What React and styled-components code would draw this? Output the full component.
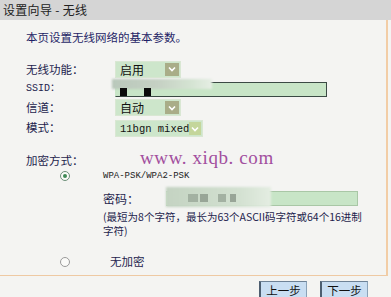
import React from 'react';
import styled, { createGlobalStyle } from 'styled-components';

//Page CSS
const Global = createGlobalStyle`
  html, body {
    margin: 0;
    padding: 0;
    background: #f4f4f2;
    font-family: "Noto Sans CJK SC", "DejaVu Sans", sans-serif;
    font-size: 12px;
    color: #1d1d4d;
  }
`;

const Page = styled.div`
  width: 391px;
  height: 297px;
  overflow: hidden;
  position: relative;
  background: #f4f4f2;
`;

const TitleBar = styled.div`
  height: 20px;
  line-height: 19px;
  padding-left: 3px;
  background: #d5d5d5;
  color: #222;
  font-size: 12px;
  letter-spacing: 0.3px;
`;

const Panel = styled.div`
  width: 388px;
  height: 256px;
  border-right: 2px solid #f2cda6;
  border-bottom: 1px solid #eec9a3;
  padding-left: 26px;
  box-sizing: border-box;
  position: relative;
`;

const Intro = styled.div`
  padding-top: 9px;
  height: 27px;
  line-height: 16px;
  font-size: 11.5px;
  color: #1f1f66;
`;

const FormGrid = styled.div`
  display: grid;
  grid-template-columns: 89px 1fr;
  grid-auto-rows: auto;
  align-items: center;
  margin-top: 3px;
`;

const Label = styled.div`
  font-family: ${p => (p.mono ? '"Liberation Mono", "Noto Sans CJK SC", monospace' : '"Noto Sans CJK SC", sans-serif')};
  font-size: ${p => (p.mono ? '10px' : '11.5px')};
  height: ${p => p.h || 19}px;
  line-height: ${p => p.h || 19}px;
  color: #1d1d4d;
`;

const Select = styled.div`
  display: flex;
  align-items: center;
  width: ${p => p.w}px;
  height: 17px;
  box-sizing: border-box;
  border: 1px solid #d9e7d3;
  background: #cde6cb;
  padding: 0 1px 0 4px;
`;

const SelectText = styled.span`
  flex: 1;
  font-family: ${p => (p.mono ? '"Liberation Mono", monospace' : '"Noto Sans CJK SC", sans-serif')};
  font-size: ${p => (p.mono ? '10.5px' : '12px')};
  color: #111;
  white-space: nowrap;
`;

const Arrow = styled.span`
  width: 14px;
  height: 13px;
  background: ${p => (p.light ? '#c4d69b' : '#a9ad88')};
  display: flex;
  align-items: center;
  justify-content: center;
`;

const TextInput = styled.div`
  position: relative;
  width: ${p => p.w}px;
  height: ${p => p.h}px;
  box-sizing: border-box;
  background: #c8e5c7;
  border: 1px solid ${p => (p.dark ? '#3b4a44' : '#a9c7a6')};
  border-left-color: #c8e5c7;
`;

const Blur = styled.div`
  position: absolute;
  left: ${p => p.x}px;
  top: ${p => p.y}px;
  width: ${p => p.w}px;
  height: ${p => p.h}px;
  background: linear-gradient(90deg, #b9c8bb 0%, #c5d0c3 45%, #d5e4d3 80%, #e6eee4 100%);
  filter: blur(1px);
`;

const Pixel = styled.div`
  position: absolute;
  left: ${p => p.x}px;
  top: ${p => p.y}px;
  width: ${p => p.w}px;
  height: ${p => p.h}px;
  background: ${p => p.c};
`;

const Section = styled.div`
  margin-top: 14px;
`;

const OptionRow = styled.div`
  display: grid;
  grid-template-columns: 77px 1fr;
  margin-top: ${p => p.mt || 0}px;
`;

const RadioCell = styled.div`
  display: flex;
  justify-content: center;
  padding-top: ${p => p.pt || 0}px;
`;

const Radio = styled.span`
  width: 10px;
  height: 10px;
  border-radius: 50%;
  box-sizing: border-box;
  border: 1px solid ${p => (p.checked ? '#6d8f79' : '#9a9a9a')};
  background: #fafaf8;
  display: flex;
  align-items: center;
  justify-content: center;
  &::after {
    content: '';
    width: 4px;
    height: 4px;
    border-radius: 50%;
    background: ${p => (p.checked ? '#3f8a55' : 'transparent')};
  }
`;

const Mode = styled.div`
  font-family: "Liberation Mono", monospace;
  font-size: 9px;
  height: 14px;
  line-height: 14px;
  color: #222;
`;

const PassRow = styled.div`
  display: flex;
  align-items: center;
  gap: 27px;
  margin-top: 6px;
  height: 18px;
`;

const Hint = styled.div`
  margin-top: 3px;
  font-size: 10.5px;
  line-height: 14px;
  color: #1d1d4d;
  white-space: nowrap;
`;

const PlainText = styled.div`
  font-size: 11.5px;
  color: #1d1d4d;
  padding-left: 7px;
`;

const Watermark = styled.div`
  position: absolute;
  left: 140px;
  top: 127px;
  font-family: "Liberation Serif", serif;
  font-size: 19px;
  letter-spacing: 0.6px;
  color: #a24f9e;
  white-space: pre;
`;

const Footer = styled.div`
  display: flex;
  justify-content: flex-end;
  gap: 13px;
  padding: 5px 23px 0 0;
`;

const Button = styled.button`
  width: 48px;
  height: 17px;
  padding: 0;
  border: 1px solid #8aa2b8;
  border-left: 2px solid #4d5e70;
  border-top-color: #6e8296;
  background: #c9def2;
  font-family: "Noto Sans CJK SC", sans-serif;
  font-size: 11.5px;
  line-height: 14px;
  color: #111;
`;

const Chevron = ({ light }) => (
  <Arrow light={light}>
    <svg width="8" height="6" viewBox="0 0 8 6">
      <path d="M1 1.5 L4 4.5 L7 1.5" fill="none" stroke="#fff" strokeWidth="1.6" />
    </svg>
  </Arrow>
);

//REACT Component
const App = () => (
  <Page>
    <Global />
    <TitleBar>设置向导 - 无线</TitleBar>
    <Panel>
      <Intro>本页设置无线网络的基本参数。</Intro>
      <FormGrid>
        <Label h={20}>无线功能：</Label>
        <Select w={66}>
          <SelectText>启用</SelectText>
          <Chevron />
        </Select>

        <Label mono h={19}>SSID：</Label>
        <div style={{ position: 'relative', height: 19 }}>
          <TextInput w={212} h={15} dark style={{ marginTop: 3 }} />
          <Blur x={-3} y={0} w={100} h={10} />
          <Pixel x={5} y={9} w={7} h={9} c="#0b0b0b" />
          <Pixel x={29} y={9} w={7} h={9} c="#0b0b0b" />
          <Pixel x={2} y={17} w={95} h={1} c="#3b4a44" />
        </div>

        <Label h={19}>信道：</Label>
        <Select w={66}>
          <SelectText>自动</SelectText>
          <Chevron />
        </Select>

        <Label h={21}>模式：</Label>
        <Select w={88} style={{ marginTop: 2 }}>
          <SelectText mono>11bgn mixed</SelectText>
          <Chevron light />
        </Select>
      </FormGrid>

      <Section>
        <Label h={17}>加密方式：</Label>
        <OptionRow>
          <RadioCell pt={2}>
            <Radio checked />
          </RadioCell>
          <div>
            <Mode>WPA-PSK/WPA2-PSK</Mode>
            <PassRow>
              <span>密码：</span>
              <div style={{ position: 'relative' }}>
                <TextInput w={192} h={15} />
                <Blur x={0} y={-4} w={105} h={20} style={{ background: 'linear-gradient(90deg,#c4d3c2,#d3e1d1 70%,#e4ede2)' }} />
                <Pixel x={22} y={3} w={10} h={8} c="#a3b1a2" />
                <Pixel x={34} y={3} w={8} h={8} c="#98a597" />
                <Pixel x={52} y={3} w={8} h={8} c="#a3b1a2" />
                <Pixel x={64} y={3} w={6} h={8} c="#98a597" />
              </div>
            </PassRow>
            <Hint>
              (最短为8个字符，最长为63个ASCII码字符或64个16进制
              <br />
              字符)
            </Hint>
          </div>
        </OptionRow>
        <OptionRow mt={15}>
          <RadioCell pt={4}>
            <Radio />
          </RadioCell>
          <PlainText>无加密</PlainText>
        </OptionRow>
      </Section>
      <Watermark>www. xiqb. com</Watermark>
    </Panel>
    <Footer>
      <Button>上一步</Button>
      <Button>下一步</Button>
    </Footer>
  </Page>
);

export default App;
